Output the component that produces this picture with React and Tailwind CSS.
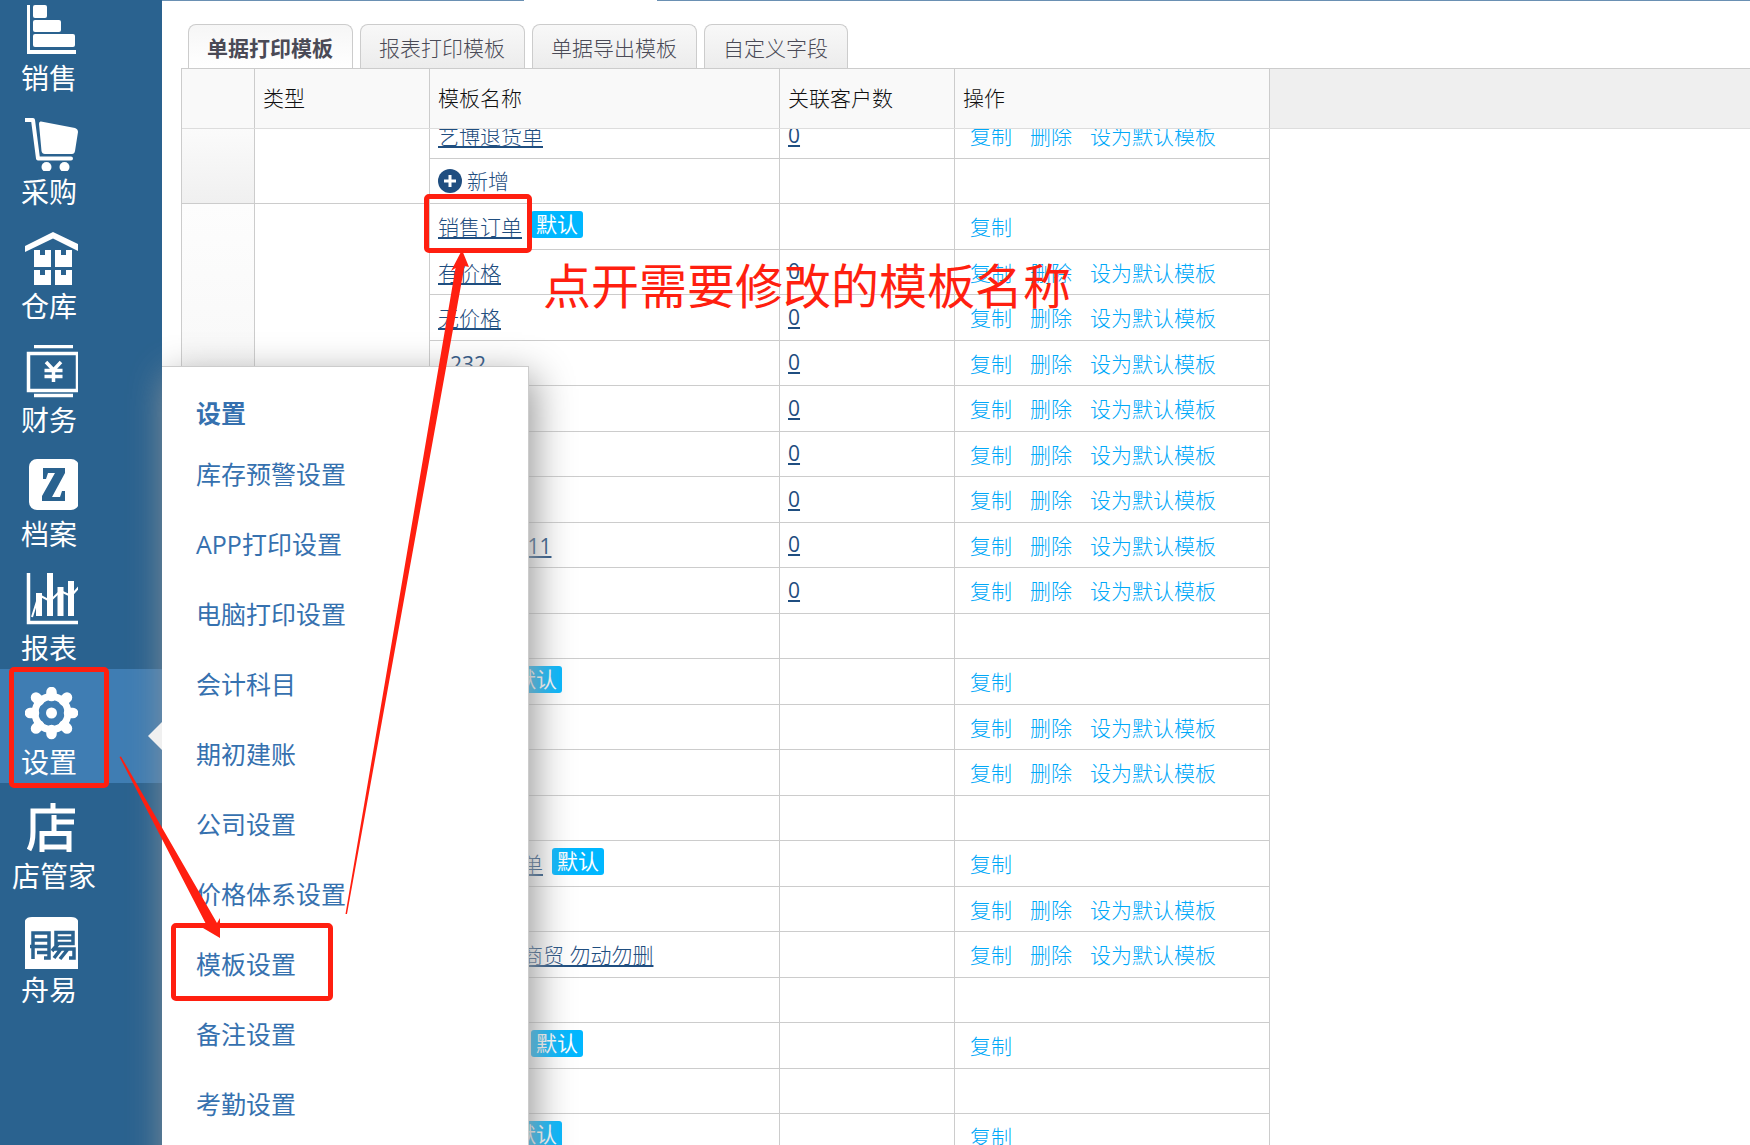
import React, { useState } from "react";
import { clsx } from "clsx";

const MENU = [
  { name: "销售", icon: SalesIcon },
  { name: "采购", icon: CartIcon },
  { name: "仓库", icon: StoreIcon },
  { name: "财务", icon: MoneyIcon },
  { name: "档案", icon: FileIcon },
  { name: "报表", icon: ReportIcon },
  { name: "设置", icon: GearIcon },
  { name: "店管家", icon: ShopIcon },
  { name: "舟易", icon: ZhouyiIcon },
];

const SETTINGS = [
  "库存预警设置",
  "APP打印设置",
  "电脑打印设置",
  "会计科目",
  "期初建账",
  "公司设置",
  "价格体系设置",
  "模板设置",
  "备注设置",
  "考勤设置",
];

const TABS = ["单据打印模板", "报表打印模板", "单据导出模板", "自定义字段"];

// every group ends with its own "新增" row
const GROUPS = [
  [{ name: "艺博退货单", count: 0 }],
  [
    { name: "销售订单", isDefault: true },
    { name: "有价格", count: 0 },
    { name: "无价格", count: 0 },
    { name: "1232", count: 0 },
    { name: "模板一", count: 0 },
    { name: "模板二", count: 0 },
    { name: "模板三", count: 0 },
    { name: "销售订单 11", count: 0 },
    { name: "模板四", count: 0 },
  ],
  [{ name: "销售单", isDefault: true }, { name: "价格" }, { name: "价格" }],
  [
    { name: "销售退货单", isDefault: true },
    { name: "价格" },
    { name: "艺博科技商贸 勿动勿删" },
  ],
  [{ name: "采购订单", isDefault: true }],
  [{ name: "采购单", isDefault: true }],
];

function SalesIcon() {
  return (
    <svg className="size-[54px]" viewBox="0 -2 54 54" fill="#fff">
      <path d="M2 0h3v45h46v4H2z" />
      <rect x="8" y="0" width="14" height="13" rx="2" />
      <rect x="8" y="15" width="28" height="12" rx="2" />
      <rect x="8" y="29" width="42" height="13" rx="2" />
    </svg>
  );
}

function CartIcon() {
  return (
    <svg className="size-[54px]" viewBox="0 -1 54 54" fill="#fff">
      <path
        d="M-1 2H8l5 38.500H46"
        fill="none"
        stroke="#fff"
        strokeWidth="4"
        strokeLinecap="round"
        strokeLinejoin="round"
      />
      <path d="M16 3.500 50 10Q53 11 53 14L50 33Q49.500 36 47 36H20Q17 36 16.500 33L14 6Q14 3 16 3.500z" />
      <circle cx="21.500" cy="49" r="5" />
      <circle cx="39.500" cy="49" r="5" />
    </svg>
  );
}

function StoreIcon() {
  return (
    <svg className="size-[54px] overflow-visible" viewBox="0 -1 54 54" fill="#fff">
      <path d="M0 14 28 0 53 12v7L28 6.500 0 20z" />
      <path d="M9 18h6v5h5v-5h6v17H9zM30 18h6v5h5v-5h6v17H30zM9 38h6v5h5v-5h6v17H9zM30 38h6v5h5v-5h6v17H30z" />
    </svg>
  );
}

function MoneyIcon() {
  return (
    <svg className="size-[54px]" viewBox="0 0 54 54" fill="none" stroke="#fff">
      <path d="M9 1.500H48M9 50.500H48" strokeWidth="3.500" />
      <rect x="3.500" y="8.500" width="49" height="37" strokeWidth="3.500" />
      <path d="M21 17 28.500 25 36 17M28.500 25V37M19.500 25.500H37.500M19.500 31.500H37.500" strokeWidth="3.500" />
    </svg>
  );
}

function FileIcon() {
  return (
    <svg className="size-[54px]" viewBox="0 0 54 54">
      <rect x="4" y="0" width="50" height="51" rx="8" fill="#fff" />
      <path
        d="M18 9H40V14L27 38H35L37 32H40V42H17V37L30 14H23L21 20H18z"
        fill="#2a628f"
      />
    </svg>
  );
}

function ReportIcon() {
  return (
    <svg className="size-[54px]" viewBox="0 0 54 54" fill="none" stroke="#fff">
      <path d="M3.500 0V49.500H54" strokeWidth="3.500" />
      <path d="M14 20V43M25 0V43M35.500 14V43M46 8V43" strokeWidth="6" />
      <path d="M7 44 14 22 25 28 35.500 18 46 23 54 14" strokeWidth="2" />
    </svg>
  );
}

function GearIcon() {
  return (
    <svg className="size-[54px]" viewBox="0 0 54 54" fill="none" stroke="#fff">
      <circle cx="26.500" cy="26" r="16.500" strokeWidth="7" />
      <circle cx="26.500" cy="26" r="5.500" fill="#fff" stroke="none" />
      <g strokeWidth="10.500" strokeLinecap="round">
        <path d="M26.500 5V9M26.500 43V47M5 26H9M44 26H48" />
        <path d="M11 10.500 14 13.500M39 38.500 42 41.500M11 41.500 14 38.500M39 13.500 42 10.500" />
      </g>
    </svg>
  );
}

function ShopIcon() {
  return (
    <svg className="size-[54px]" viewBox="0 -2 54 54" fill="none" stroke="#fff" strokeWidth="5">
      <path d="M4 47Q8 40 8 29V8H50M28 0V8M29 12V30M29 19H49M17 49V30.500H44V49M17 44H44" />
    </svg>
  );
}

function ZhouyiIcon() {
  return (
    <svg className="size-[54px]" viewBox="0 -2 54 54">
      <path d="M7 0H46Q54 0 54 8V52H-1V8Q-1 0 7 0z" fill="#fff" />
      <g fill="none" stroke="#2a628f" strokeWidth="3.500">
        <path d="M8 42V16H24V41H19M5 29.500H24M8 23H24M12 35.500H24" />
        <path d="M31 15.500H48V26.500H31zM31 21H48M33 27 27 34M29 32H49V41H44M36 32 29 41M43 32 35 42" />
      </g>
    </svg>
  );
}

function PlusIcon() {
  return (
    <svg className="size-6" viewBox="0 0 24 24">
      <circle cx="12" cy="12" r="12" fill="#1f4e80" />
      <path d="M12 6V18M6 12H18" stroke="#fff" strokeWidth="3" />
    </svg>
  );
}

function Sidebar({ active, setActive }) {
  return (
    <nav className="w-[162px] shrink-0 overflow-hidden bg-[#2a628f]">
      <div className="-mt-[15px]">
        {MENU.map(({ name, icon: Icon }) => (
          <button
            key={name}
            onClick={() => setActive(name)}
            className={clsx(
              "flex h-[114px] w-full flex-col items-start pt-[18px] text-[28px] leading-[42px] text-white",
              name === active && "bg-[#3f7db3]"
            )}
          >
            <span className="ml-[25px] block h-[54px] w-[53px] overflow-hidden">
              <Icon />
            </span>
            <span className={name.length > 2 ? "pl-3" : "pl-[21px]"}>{name}</span>
          </button>
        ))}
      </div>
    </nav>
  );
}

function SettingsPanel() {
  return (
    <div className="absolute top-[366px] -bottom-20 left-[162px] w-[367px] border-t border-r border-[#ccc] bg-white pt-[23px] pl-[34px] text-[25px] text-[#3671af] shadow-[6px_10px_36px_#999]">
      <svg className="absolute top-[355px] -left-[14px] h-7 w-[14px]" viewBox="0 0 14 28">
        <path d="M0 14 14 0V28z" fill="#f0f0f0" />
      </svg>
      <h2 className="h-[49px] leading-[46px] font-bold">设置</h2>
      <ul>
        {SETTINGS.map((s) => (
          <li key={s} className="h-[70px] leading-[70px]">
            <a href="#">{s}</a>
          </li>
        ))}
      </ul>
    </div>
  );
}

function Cols() {
  return (
    <colgroup>
      <col className="w-[73px]" />
      <col className="w-[175px]" />
      <col className="w-[350px]" />
      <col className="w-[175px]" />
      <col className="w-[315px]" />
    </colgroup>
  );
}

function TemplateRow({ row, first, span }) {
  const cell = "border-r border-b border-[#ccc] p-0";
  return (
    <tr className="odd:h-[46px] even:h-[45px]">
      {first && (
        <>
          <td rowSpan={span} className={clsx(cell, "bg-linear-to-b from-[#fdfdfd] to-[#f0f0f0]")}></td>
          <td rowSpan={span} className={cell}></td>
        </>
      )}
      <td className={cell}>
        <div className="flex items-center gap-[9px] pl-2 leading-7 whitespace-nowrap text-[#1f4e80]">
          {row.add ? (
            <button className="flex items-center gap-[5px]">
              <PlusIcon />
              新增
            </button>
          ) : (
            <a
              href="#"
              className={clsx(
                "pt-px underline decoration-2 underline-offset-2",
                /\d/.test(row.name) && "font-normal"
              )}
            >
              {row.name}
            </a>
          )}
          {row.isDefault && (
            <span className="mb-1 h-[27px] rounded-[3px] bg-[#00b7ff] px-[5px] leading-[27px] font-normal text-white">
              默认
            </span>
          )}
        </div>
      </td>
      <td className={cell}>
        {row.count !== undefined && (
          <a
            href="#"
            className="ml-2 pt-px leading-7 font-normal text-[#1f4e80] underline decoration-2 underline-offset-2"
          >
            {row.count}
          </a>
        )}
      </td>
      <td className={cell}>
        {!row.add && (
          <div className="flex gap-[18px] pt-px pl-[15px] leading-7 text-[#00a8f8]">
            <button>复制</button>
            {!row.isDefault && (
              <>
                <button>删除</button>
                <button>设为默认模板</button>
              </>
            )}
          </div>
        )}
      </td>
    </tr>
  );
}

// red marks drawn over the page
function Guide() {
  return (
    <div className="pointer-events-none absolute inset-0 text-[#ff1f10]">
      <div className="absolute top-[667px] left-[9px] h-[121px] w-[100px] rounded-[5px] border-5"></div>
      <div className="absolute top-[923px] left-[171px] h-[78px] w-[162px] rounded-[5px] border-5"></div>
      <div className="absolute top-[194px] left-[424px] h-[59px] w-[108px] rounded-[5px] border-5"></div>
      <svg className="absolute top-0 left-0 h-[1145px] w-[560px]" viewBox="0 0 560 1145" fill="currentColor">
        <path d="M119.500 757 121 756.500 217 923 220 918V938L203 928 207 926z" />
        <path d="M345.500 914H347L464.500 266 469 267 462 250 451 271 455.500 268z" />
      </svg>
      <p className="absolute top-[250px] left-[543px] text-[48px] leading-[72px] whitespace-nowrap">
        点开需要修改的模板名称
      </p>
    </div>
  );
}

export default function App() {
  const [active, setActive] = useState("设置");
  const [tab, setTab] = useState(TABS[0]);

  return (
    <div className="relative flex h-screen overflow-hidden bg-white font-['Open_Sans','Noto_Sans_CJK_SC',sans-serif]">
      <Sidebar active={active} setActive={setActive} />

      <main className="flex min-w-0 flex-1 flex-col text-[21px] font-light">
        <div className="flex h-6 shrink-0">
          <div className="w-[362px] border-t border-[#6a90b3]"></div>
          <div className="ml-[133px] flex-1 border-t border-[#6a90b3]"></div>
        </div>

        <div className="flex shrink-0 gap-[7px] pl-[26px]">
          {TABS.map((t) => (
            <button
              key={t}
              onClick={() => setTab(t)}
              className={clsx(
                "h-11 rounded-t-lg border border-b-0 border-[#ccc] bg-linear-to-b pt-1 pr-[19px] pl-[18px] text-[#4a4a56]",
                t === tab ? "from-[#f6f6f6] to-white font-bold" : "from-[#f8f8f8] to-[#ececec]"
              )}
            >
              {t}
            </button>
          ))}
        </div>

        <div className="ml-[19px] flex min-h-0 flex-1 flex-col border-t border-l border-[#ccc]">
          <div className="shrink-0 border-b border-[#ddd] bg-[#efefef]">
            <table className="w-[1088px] table-fixed border-separate border-spacing-0">
              <Cols />
              <thead>
                <tr className="h-[59px] bg-[#f9f9f9] text-left text-[#111]">
                  {["", "类型", "模板名称", "关联客户数", "操作"].map((h) => (
                    <th key={h} className="border-r border-[#ccc] py-0 pr-0 pl-2 font-light">
                      {h}
                    </th>
                  ))}
                </tr>
              </thead>
            </table>
          </div>
          <div className="min-h-0 flex-1 overflow-hidden">
            <table className="-mt-4 w-[1088px] table-fixed border-separate border-spacing-0">
              <Cols />
              <tbody>
                {GROUPS.flatMap((rows, g) =>
                  [...rows, { add: true }].map((row, i) => (
                    <TemplateRow key={g + "-" + i} row={row} first={i === 0} span={rows.length + 1} />
                  ))
                )}
              </tbody>
            </table>
          </div>
        </div>
      </main>

      <SettingsPanel />
      <Guide />
    </div>
  );
}
